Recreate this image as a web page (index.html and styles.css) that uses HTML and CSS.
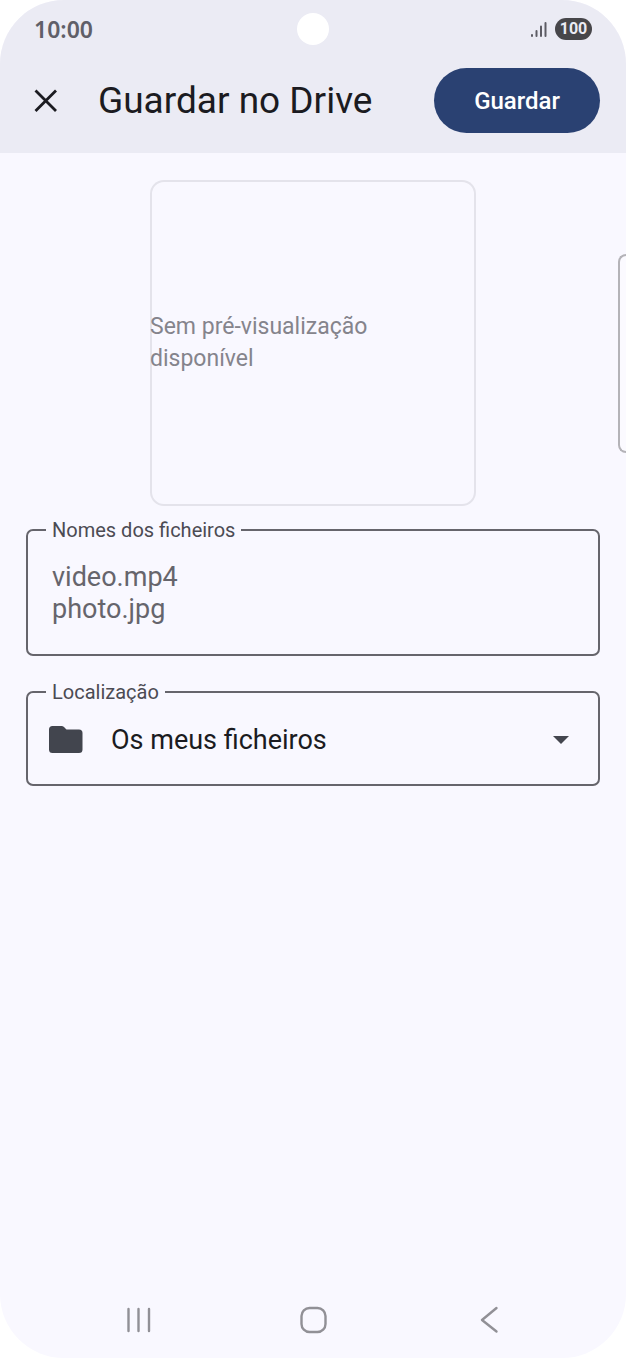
FILE: index.html
```html
<!DOCTYPE html>
<html lang="pt">
<head>
<meta charset="utf-8">
<meta name="viewport" content="width=device-width, initial-scale=1">
<title>Guardar no Drive</title>
<link rel="stylesheet" href="styles.css">
</head>
<body>
<div class="phone">
  <header class="top">
    <div class="status">
      <time class="clock">10:00</time>
      <span class="camera"></span>
      <div class="indicators">
        <svg class="signal" width="18" height="18" viewBox="0 0 18 18" aria-hidden="true">
          <path d="M2 15v1M6.500 11v5M11 6.500v9.500M15.500 3v13" fill="none" stroke="#5d5c64" stroke-width="2" stroke-linecap="round"/>
        </svg>
        <span class="battery">100</span>
      </div>
    </div>
    <div class="toolbar">
      <button class="close" type="button" aria-label="Fechar">
        <svg width="24" height="24" viewBox="0 0 24 24" aria-hidden="true">
          <path d="M1.500 1.500L22 22M22 1.500L1.500 22" fill="none" stroke="#1b1b21" stroke-width="2.800"/>
        </svg>
      </button>
      <h1 class="title">Guardar no Drive</h1>
      <button class="save" type="submit" form="save-form">Guardar</button>
    </div>
  </header>

  <form class="content" id="save-form">
    <div class="preview"><p class="preview-text">Sem pré-visualização disponível</p></div>

    <fieldset class="field">
      <legend class="legend"><label for="names">Nomes dos ficheiros</label></legend>
      <textarea class="names" id="names" rows="2">video.mp4
photo.jpg</textarea>
    </fieldset>

    <fieldset class="field">
      <legend class="legend"><label for="location">Localização</label></legend>
      <div class="location-row">
        <svg class="folder" width="34" height="28" viewBox="0 0 34 28" aria-hidden="true">
          <path d="M3.500 0H12.500Q14 0 15 1L17.500 3.500H30Q33.500 3.500 33.500 7V23.500Q33.500 27 30 27H3.500Q0 27 0 23.500V3.500Q0 0 3.500 0Z" fill="#42454e"/>
        </svg>
        <select class="location" id="location">
          <option>Os meus ficheiros</option>
        </select>
        <svg class="arrow" width="16" height="8" viewBox="0 0 16 8" aria-hidden="true">
          <path d="M0 0H16L8 8Z" fill="#44464f"/>
        </svg>
      </div>
    </fieldset>
  </form>

  <span class="edge-panel"></span>

  <nav class="nav">
    <button class="nav-button" type="button" aria-label="Recentes">
      <svg width="28" height="28" viewBox="0 0 28 28" aria-hidden="true">
        <path d="M4.500 3V25M14.500 3V25M25 3V25" fill="none" stroke="#919096" stroke-width="2.400" stroke-linecap="round"/>
      </svg>
    </button>
    <button class="nav-button" type="button" aria-label="Início">
      <svg width="28" height="28" viewBox="0 0 28 28" aria-hidden="true">
        <rect x="2.500" y="2" width="24" height="24" rx="8" fill="none" stroke="#919096" stroke-width="2.400"/>
      </svg>
    </button>
    <button class="nav-button" type="button" aria-label="Voltar">
      <svg width="28" height="28" viewBox="0 0 28 28" aria-hidden="true">
        <path d="M22.500 2L8 14L22.500 25.500" fill="none" stroke="#919096" stroke-width="2.400" stroke-linecap="round" stroke-linejoin="round"/>
      </svg>
    </button>
  </nav>
</div>
</body>
</html>
```
FILE: styles.css
```css
* {
  box-sizing: border-box;
}

body {
  margin: 0;
  background: #fff;
  color: #1b1b21;
  font-family: Roboto, "Liberation Sans", sans-serif;
}

button,
select,
textarea {
  margin: 0;
  padding: 0;
  border: 0;
  background: none;
  font: inherit;
}

.phone {
  position: relative;
  display: flex;
  flex-direction: column;
  min-height: 100vh;
  overflow: hidden;
  border-radius: 64px;
  background: #f9f8ff;
}

.top {
  padding-bottom: 20px;
  background: #ebebf4;
}

.status {
  display: grid;
  grid-template-columns: 1fr auto 1fr;
  align-items: center;
  height: 58px;
  padding: 0 34px;
}

.clock {
  color: #605f68;
  font-family: "Noto Sans", sans-serif;
  font-size: 23px;
  font-weight: 600;
  line-height: 30px;
}

.camera {
  width: 32px;
  height: 32px;
  border-radius: 50%;
  background: #fff;
}

.indicators {
  display: flex;
  justify-content: flex-end;
  align-items: center;
  gap: 7px;
}

.battery {
  width: 37px;
  border-radius: 11px;
  background: #47464a;
  color: #ebebf4;
  font-size: 16px;
  font-weight: 700;
  line-height: 22px;
  text-align: center;
}

.toolbar {
  display: flex;
  align-items: center;
  padding: 10px 26px 0 34px;
}

.close {
  display: flex;
}

.title {
  flex: 1;
  margin: 0 0 0 40px;
  font-size: 37px;
  font-weight: 400;
  line-height: 44px;
}

.save {
  height: 65px;
  padding: 0 40px;
  border-radius: 33px;
  background: #2a4172;
  color: #fff;
  font-size: 24px;
  font-weight: 500;
}

.content {
  flex: 1;
  padding: 27px 26px;
}

.preview {
  display: flex;
  align-items: center;
  width: 326px;
  aspect-ratio: 1;
  margin: 0 auto 12px;
  border-radius: 14px;
  box-shadow: inset 0 0 0 2px #e4e3eb;
}

.preview-text {
  margin: 0;
  padding-right: 80px;
  color: #85848c;
  font-size: 23px;
  line-height: 32px;
}

.field {
  min-width: 0;
  margin: 0 0 24px;
  padding: 0;
  border: 2px solid #66656c;
  border-radius: 7px;
}

.legend {
  margin-left: 18px;
  padding: 0 6px;
  color: #4c4b53;
  font-size: 20px;
  line-height: 24px;
}

.names {
  display: block;
  width: 100%;
  height: 112px;
  padding: 19px 24px;
  outline: 0;
  resize: none;
  overflow: hidden;
  color: #66656c;
  font-size: 27px;
  line-height: 32px;
}

.location-row {
  display: grid;
  grid-template-columns: auto 1fr auto;
  align-items: center;
  padding: 13px 29px 21px 21px;
}

.location {
  grid-area: 1 / 2 / 2 / 4;
  height: 46px;
  padding-left: 28px;
  appearance: none;
  outline: 0;
  color: #1b1b21;
  font-size: 27px;
}

.folder {
  grid-area: 1 / 1;
}

.arrow {
  grid-area: 1 / 3;
  pointer-events: none;
}

.edge-panel {
  position: absolute;
  top: 254px;
  right: 0;
  width: 8px;
  height: 199px;
  border: 2px solid #b4b3b8;
  border-right: 0;
  border-radius: 8px 0 0 8px;
  background: #fbfaff;
}

.nav {
  display: grid;
  grid-template-columns: repeat(3, 1fr);
  padding: 0 51px 24px;
}

.nav-button {
  display: flex;
  justify-content: center;
}
```
